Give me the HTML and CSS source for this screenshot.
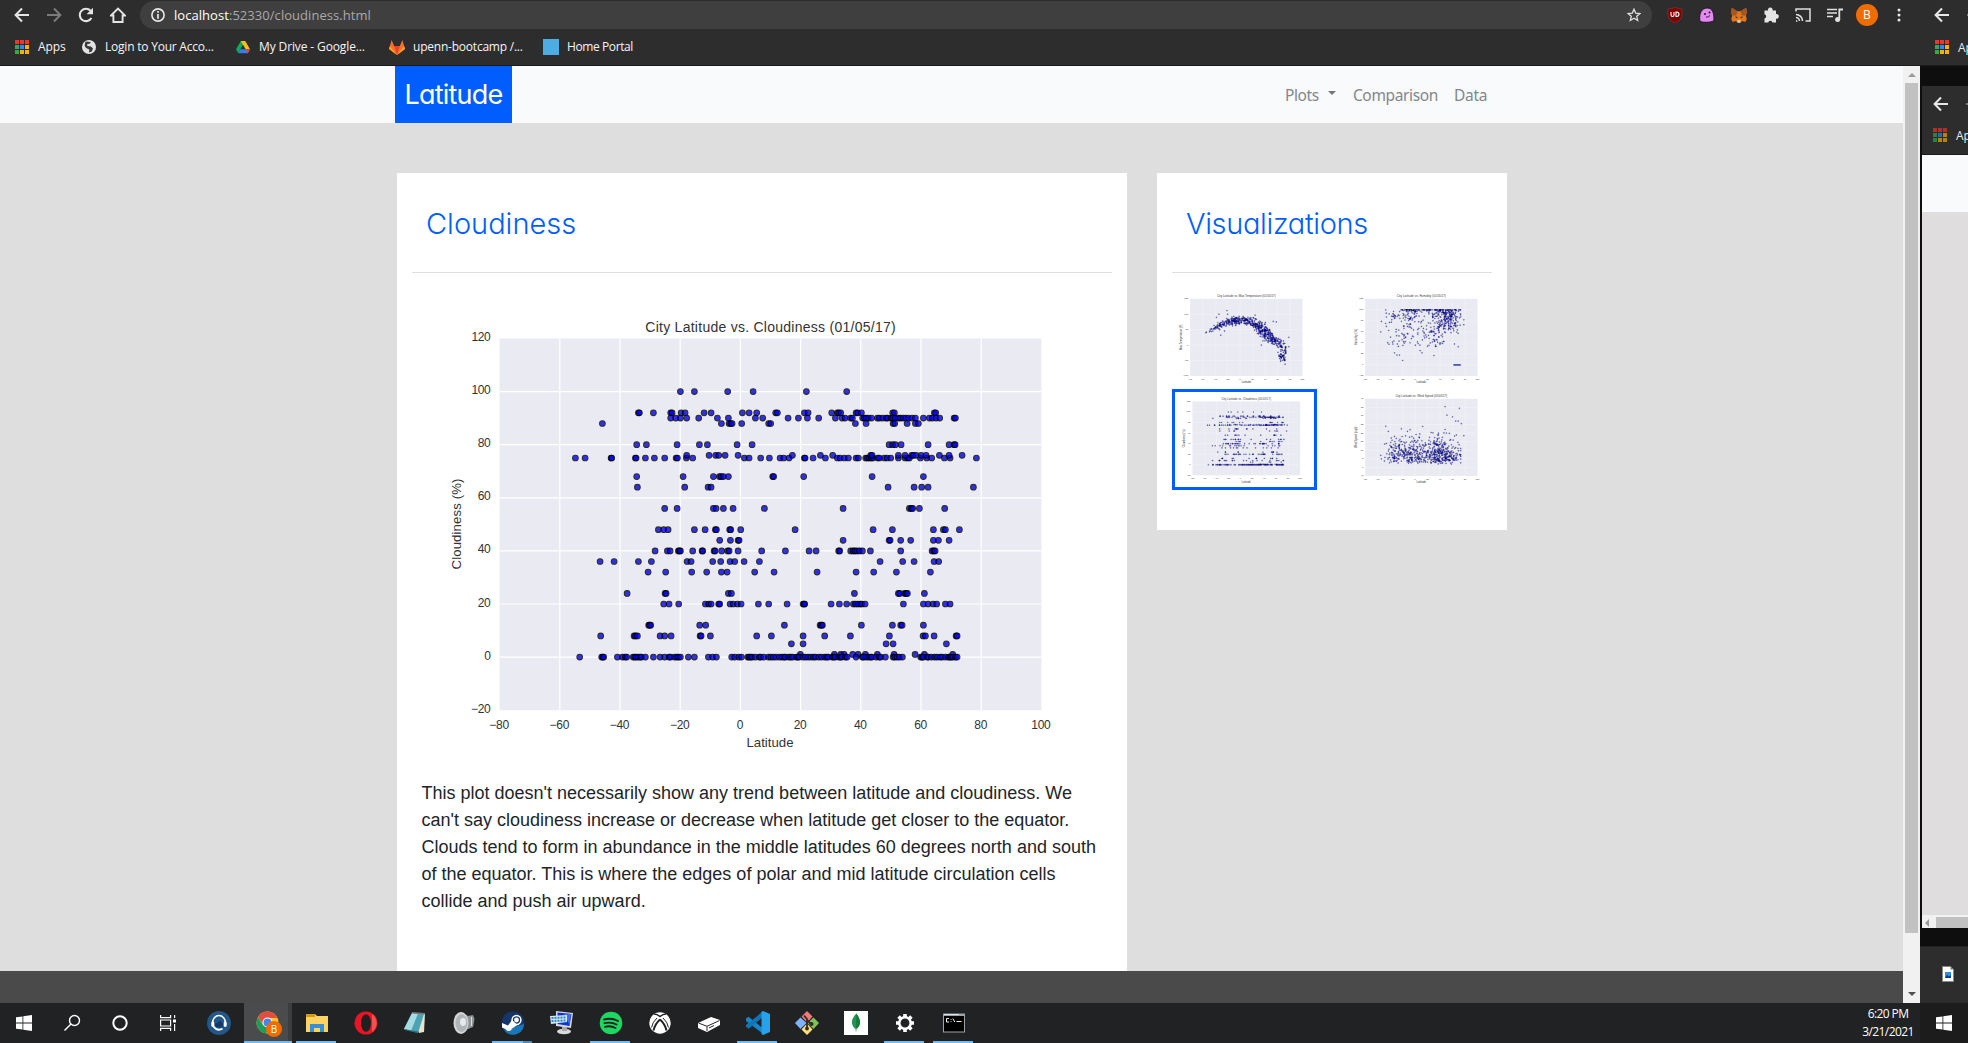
FILE: index.html
```html
<!DOCTYPE html>
<html lang="en">
<head>
<meta charset="utf-8">
<title>Latitude - Cloudiness</title>
<link rel="stylesheet" href="styles.css">
</head>
<body>
<svg class="defs" aria-hidden="true">
  <symbol id="back" viewBox="0 0 16 16"><path d="M15 8H2M8 1.5 1.6 8 8 14.5" fill="none" stroke="currentColor" stroke-width="2"/></symbol>
  <symbol id="forward" viewBox="0 0 16 16"><path d="M1 8h13M8 1.5 14.4 8 8 14.5" fill="none" stroke="currentColor" stroke-width="2"/></symbol>
  <symbol id="grid" viewBox="0 0 14 14">
    <path fill="#f0352b" d="M0 0h4v4H0zM5 0h4v4H5zM10 0h4v4h-4z"/>
    <path fill="#34a853" d="M0 5h4v4H0zM0 10h4v4H0z"/><path fill="#2a8cff" d="M5 5h4v4H5z"/>
    <path fill="#fbb100" d="M10 5h4v4h-4zM5 10h4v4H5zM10 10h4v4h-4z"/>
  </symbol>
  <symbol id="windows" viewBox="0 0 16 16"><path fill="#fff" d="M0 2.3 6.5 1.4v6.1H0zM7.3 1.2 16 0v7.5H7.3zM0 8.4h6.5v6.2L0 13.7zM7.3 8.4H16V16l-8.7-1.2z"/></symbol>
</svg>

<div class="desktop">
  <div class="monitor">
    <header class="toolbar">
      <div class="address-row">
        <svg class="nav-icon"><use href="#back"/></svg>
        <svg class="nav-icon dim"><use href="#forward"/></svg>
        <svg class="nav-icon" viewBox="0 0 16 16"><path d="M13.4 11A6.2 6.2 0 1 1 12.6 3.8" fill="none" stroke="currentColor" stroke-width="2.1"/><path d="M15 .8v6.4H8.6z" fill="currentColor"/></svg>
        <svg class="nav-icon" viewBox="0 0 16 16"><path d="M1 8.5 8 1.5l7 7h-2.4V15H3.4V8.5z" fill="none" stroke="currentColor" stroke-width="1.9"/></svg>
        <div class="omnibox">
          <svg class="info" viewBox="0 0 14 14"><circle cx="7" cy="7" r="6.1" fill="none" stroke="currentColor" stroke-width="1.6"/><path d="M7 3.1v1.7M7 6v4.8" stroke="currentColor" stroke-width="1.7"/></svg>
          <span class="url"><b>localhost</b>:52330/cloudiness.html</span>
          <svg class="star" viewBox="0 0 14 14"><path d="m7 1.2 1.7 3.9 4.2.4-3.2 2.8 1 4.2L7 10.3l-3.7 2.2 1-4.2L1.1 5.5l4.2-.4z" fill="none" stroke="currentColor" stroke-width="1.3"/></svg>
        </div>
        <div class="extensions">
          <svg viewBox="0 0 16 16"><path d="M8 0c2 1.4 4 2 7 2v5c0 4-2.500 7-7 9-4.500-2-7-5-7-9V2c3 0 5-.6 7-2z" fill="#7d0000" stroke="#a33" stroke-width=".6"/><path d="M4 5v3q0 1.500 1.500 1.500T7 8V5M9 5v4.500h.7A2.200 2.200 0 0 0 9.700 5z" fill="none" stroke="#fff" stroke-width="1.1"/></svg>
          <svg viewBox="0 0 16 16"><path d="M1 14.500C-.5 6 3 .8 8.500 1c5 .2 7 5.500 6.300 13-3 1.500-11 1.800-13.800.5z" fill="#e38af0" stroke="#2a102d"/><circle cx="6" cy="7" r="1" fill="#241028"/><circle cx="10.500" cy="5.500" r="1" fill="#241028"/><path d="M7 10q2.500.5 4-1.500" fill="none" stroke="#241028" stroke-width=".9"/></svg>
          <svg viewBox="0 0 16 16"><path d="m.8.7 5.500 3.600h3.400L15.200.7l.6 5-1 3 1 3.300-1.500 3-3.300-1-1.600 1.700H6.600L5 14l-3.300 1L.2 12l1-3.300-1-3z" fill="#e2761b"/><path d="m.8.7 5.500 3.600-.8 4-3.500.4L.2 5.700zM15.200.7 9.700 4.300l.8 4 3.500.4 1.800-3z" fill="#a55422"/><path d="m4 9.500 3 .5-1.500 1.300zM12 9.500 9 10l1.500 1.300z" fill="#2b2b38"/><path d="M6.300 13h3.400l-.4 2.700H6.700z" fill="#d5c7bc"/></svg>
          <svg viewBox="0 0 16 16"><path fill="#e4e4e4" d="M5 3.500a2.400 2.400 0 1 1 4.600 0H13V7a2.400 2.400 0 1 1 0 4.700V15.500H9.500a2.200 2.200 0 0 0-4.300 0H1.500V11.500a2.200 2.200 0 0 0 0-4.300V3.500z"/></svg>
          <svg viewBox="0 0 16 16"><path d="M1 4.500V2h14v12h-4.500M1 7.500a6.500 6.500 0 0 1 6.500 6.500M1 10.500A3.500 3.500 0 0 1 4.500 14" fill="none" stroke="#e0e0e0" stroke-width="1.5"/><path d="M1 12.800A2 2 0 0 1 2.600 14.700H1z" fill="#e0e0e0"/></svg>
          <svg viewBox="0 0 16 16"><path d="M0 2.500h10M0 6h10M0 9.500h6" stroke="#e0e0e0" stroke-width="1.7"/><path d="M12.300 13V2.500H16" fill="none" stroke="#e0e0e0" stroke-width="1.8"/><circle cx="10.600" cy="12.500" r="2.500" fill="#e0e0e0"/></svg>
          <span class="avatar">B</span>
          <svg viewBox="0 0 16 16"><g fill="#e8e8e8"><circle cx="8" cy="3" r="1.500"/><circle cx="8" cy="8" r="1.500"/><circle cx="8" cy="13" r="1.500"/></g></svg>
        </div>
      </div>
      <nav class="bookmarks">
        <span class="bookmark apps"><svg><use href="#grid"/></svg>Apps</span>
        <span class="bookmark login"><svg viewBox="0 0 14 14"><circle cx="7" cy="7" r="7" fill="#e3e3e3"/><path d="M3.500 1.600 8.600 2l-.5 1.500-3 .8.200 1.700 3.700.6 2 2-1.200 3L7 12.600l.3-3L4 8 2.600 5.500z" fill="#393939"/><path d="M7.500 3.800 11 4.500l-1 1.400z" fill="#e3e3e3"/></svg>Login to Your Acco...</span>
        <span class="bookmark drive"><svg viewBox="0 0 16 14"><path d="M5.500 0h5L5 9.500 2.500 14 0 9.500z" fill="#13a95b"/><path d="M5.500 0h5L16 9.500h-5z" fill="#fdc011"/><path d="M5 9.500h11L13.500 14h-11z" fill="#3a7cf0"/><path d="M11 9.500h5L13.500 14z" fill="#e94235"/></svg>My Drive - Google...</span>
        <span class="bookmark gitlab"><svg viewBox="0 0 16 15"><path d="M8 15 0 9 2.600 0l2.600 6h5.600l2.600-6L16 9z" fill="#fc6d26"/><path d="M8 15 5.200 6h5.600z" fill="#e2432a"/><path d="M0 9 1 6l7 9zM16 9l-1-3-7 9z" fill="#fca326"/></svg>upenn-bootcamp /...</span>
        <span class="bookmark portal"><i></i>Home Portal</span>
      </nav>
    </header>

    <div class="viewport">
      <div class="page">
        <nav class="navbar">
          <a class="brand">Latitude</a>
          <div class="links"><a class="plots">Plots<i></i></a><a class="comparison">Comparison</a><a>Data</a></div>
        </nav>
        <main class="content">
          <section class="card article">
            <h1>Cloudiness</h1>
            <hr>
            <svg class="plot" id="plot-cloudiness" viewBox="0 0 699 466"></svg>
            <p>This plot doesn't necessarily show any trend between latitude and cloudiness. We can't say cloudiness increase or decrease when latitude get closer to the equator. Clouds tend to form in abundance in the middle latitudes 60 degrees north and south of the equator. This is where the edges of polar and mid latitude circulation cells collide and push air upward.</p>
          </section>
          <aside class="card side">
            <h1>Visualizations</h1>
            <hr>
            <div class="thumbs">
              <a><svg id="thumb-temperature" viewBox="0 0 699 466"></svg></a>
              <a><svg id="thumb-humidity" viewBox="0 0 699 466"></svg></a>
              <a class="active"><svg id="thumb-cloudiness" viewBox="0 0 699 466"></svg></a>
              <a><svg id="thumb-wind" viewBox="0 0 699 466"></svg></a>
            </div>
          </aside>
        </main>
        <footer class="footer"></footer>
      </div>
      <div class="scrollbar"><i class="up"></i><div class="thumb"></div><i class="down"></i></div>
    </div>

    <div class="taskbar">
      <span class="sys"><svg width="16" height="16"><use href="#windows"/></svg></span>
      <span class="sys"><svg width="18" height="18" viewBox="0 0 18 18"><circle cx="11.500" cy="6.500" r="5" fill="none" stroke="#fff" stroke-width="1.400"/><path d="m8 10-6.500 6.500" stroke="#fff" stroke-width="1.500"/></svg></span>
      <span class="sys"><svg width="16" height="16" viewBox="0 0 16 16"><circle cx="8" cy="8" r="6.700" fill="none" stroke="#fff" stroke-width="2"/></svg></span>
      <span class="sys"><svg width="16" height="16" viewBox="0 0 16 16"><path d="M.6 0v2.600h10V0M.6 16v-2.600h10V16M.6 5h10v6H.6zM14.600 0v3M14.600 9v7" fill="none" stroke="#fff" stroke-width="1.200"/><path d="M13 4.500h3v3h-3z" fill="#fff"/></svg></span>
      <span class="app first"><svg viewBox="0 0 24 24"><circle cx="12" cy="12" r="12" fill="#225787"/><path d="M5.500 12a6.500 7.500 0 0 1 13 0" fill="none" stroke="#fff" stroke-width="1.500"/><path d="M7.500 12.500q3 0 5.500-3 1.500 2.500 3.500 3-.5 4-4.500 4t-4.500-4z" fill="#123a68"/><rect x="4.300" y="10.500" width="3" height="5.500" rx="1.400" fill="#fff"/><rect x="16.700" y="10.500" width="3" height="5.500" rx="1.400" fill="#fff"/><path d="M6.500 15.500q3.500 5 9 2.300" fill="none" stroke="#fff" stroke-width="1.800"/></svg></span>
      <span class="app chrome"><svg viewBox="0 0 24 24"><circle cx="11.500" cy="11.500" r="11" fill="#fbc62c"/><path d="M2 6A11 11 0 0 1 21.500 7h-10L7 13z" fill="#df4e41"/><path d="M2 6a11 11 0 0 0 8 16.400L14 15 7 14z" fill="#1c9d5b"/><circle cx="11.500" cy="11.500" r="5" fill="#fff"/><circle cx="11.500" cy="11.500" r="4" fill="#4285f4"/></svg><b>B</b></span>
      <span class="app open"><svg viewBox="0 0 24 24"><path d="M1 3h9l2 2h11v16H1z" fill="#ffd264"/><path d="M1 3h9v3H1z" fill="#d99814"/><path d="M5 13h14v8h-4v-4H9v4H5z" fill="#378fd8"/></svg></span>
      <span class="app"><svg viewBox="0 0 24 24"><ellipse cx="12" cy="12" rx="11.500" ry="11.500" fill="#e81525"/><path d="M18 3a11 11 0 0 1 0 18z" fill="#f5524f"/><ellipse cx="12" cy="12" rx="5" ry="8.700" fill="#1f2022"/></svg></span>
      <span class="app"><svg viewBox="0 0 24 24"><path d="m9 2 13 1-1 18-5 1z" fill="#e8e2cc"/><path d="m9 2 12 1-6 19L1 18z" fill="#4ba3b4"/><path d="m9 2 6 .5L8 20 1 18z" fill="#a5dbe2"/><path d="m1 18 14 2.500V22L1 19z" fill="#2f6b76"/><path d="m9 1.800 13 1" stroke="#777" stroke-width="1.600"/></svg></span>
      <span class="app"><svg viewBox="0 0 24 24"><path d="m9 1 7 4 5-1 1.500 4-1.500 8-5 2-7 5z" fill="#8f9496"/><ellipse cx="9" cy="12" rx="7.500" ry="11" fill="#d4d6d7"/><ellipse cx="9.500" cy="12" rx="6" ry="9" fill="#b1b5b8"/><ellipse cx="11" cy="11" rx="3" ry="4" fill="#e8e9ea"/><path d="M19.500 6v9" stroke="#ddd"/></svg></span>
      <span class="app open steam"><svg viewBox="0 0 24 24"><circle cx="12" cy="12" r="11.500" fill="#14366b"/><path d="M3 19a11 11 0 0 0 20-6z" fill="#1a76b5"/><circle cx="15.500" cy="9" r="4.400" fill="none" stroke="#fff" stroke-width="1.500"/><circle cx="15.500" cy="9" r="2.400" fill="#fff"/><path d="m1 12 6 2.500 4-5.500 5.500 5-5.500 3.500a3.300 3.300 0 0 1-6 1L1 16.500z" fill="#fff"/></svg></span>
      <span class="app"><svg viewBox="0 0 24 24"><path d="m6 0 17 2-2 15-15-2z" fill="#d7d9df"/><path d="m7.500 1.500 14 1.500-2 12-12-2z" fill="#1330d2"/><path d="m14 2.500 7 .6-1.500 11z" fill="#416cf2"/><ellipse cx="14" cy="20.500" rx="7" ry="2.800" fill="#dadada"/><path d="M12 16h5v4h-5z" fill="#aaa"/><path d="m0 5 17-1v7L1 13z" fill="#d8e7f0"/><path d="m1.500 7 14-.5M1.500 10l14-.5" stroke="#2889c6" stroke-width="2" stroke-dasharray="2 1"/></svg></span>
      <span class="app open"><svg viewBox="0 0 24 24"><circle cx="12" cy="12" r="11.300" fill="#1ed760"/><path d="M5 8.500q7.500-2 14 1.500M5.500 12.200q6.500-1.700 12 1.300M6 15.800q5.500-1.500 10.500 1.200" fill="none" stroke="#1e2320" stroke-width="1.900" stroke-linecap="round"/></svg></span>
      <span class="app"><svg viewBox="0 0 24 24"><circle cx="12" cy="12" r="10.700" fill="#fff"/><path d="M6 3q3 0 6 2.500Q15 3 18 3" fill="none" stroke="#202124" stroke-width="1.600"/><path d="M12 8.500Q7 13 5.500 19.500M12 8.500q5 4.500 6.500 11" fill="none" stroke="#202124" stroke-width="2"/><path d="M9 7Q4.500 11 3.500 16.500M15 7q4.500 4 5.500 9.500" fill="none" stroke="#202124" stroke-width="1"/></svg></span>
      <span class="app"><svg viewBox="0 0 24 24"><path d="m1 12 13-6 9 3v5l-13 7-9-4z" fill="#fff"/><path d="m1.500 12 8.500 3.300L22.500 9.500M10 15.500V20M12 17l5-2.500" fill="none" stroke="#242424"/></svg></span>
      <span class="app open"><svg viewBox="0 0 24 24"><path d="M17 1 2.500 15 0 16.500V14L17 1z" fill="#1280c6"/><path d="m0 7.500 2.500-1.700L18 18v5.500L0 10z" fill="#1685cc"/><path d="m0 15 17-15v6L2.500 18z" fill="#0d75b8"/><path d="m17 0 7 3v18l-7 3-1.500-1V1z" fill="#26a2ec"/></svg></span>
      <span class="app"><svg viewBox="0 0 24 24"><path d="m12 0 5.500 5.500-5.500 6-5.500-6z" fill="#f07a7a"/><path d="m5.500 6.500 6 5.500-6 6L0 12z" fill="#80b3ff"/><path d="m18.500 6.500 5.500 5.500-5.500 6-6-6z" fill="#7cc458"/><path d="m12 12.500 5.500 6L12 24l-5.500-5.500z" fill="#ffe07a"/><path d="M9 4.500 12 8v10M12 9l4 4" fill="none" stroke="#302c2b" stroke-width="1.800"/><circle cx="12" cy="17.500" r="1.900" fill="#302c2b"/><circle cx="16.500" cy="13" r="2" fill="#302c2b"/></svg></span>
      <span class="app"><svg viewBox="0 0 24 24"><path d="M0 0h24v24H0z" fill="#fff"/><path d="M12.300 2.500C6 9 7 15 12 18.500c5.500-4 5-10 .3-16z" fill="#219653"/><path d="M12.300 2.500c4.700 6 5.200 12-.3 16z" fill="#167b3c"/><path d="M12 17v3.500" stroke="#999"/></svg></span>
      <span class="app open"><svg viewBox="0 0 24 24"><circle cx="12" cy="12" r="5.700" fill="none" stroke="#fff" stroke-width="2.500"/><path d="M12 3v3M12 18v3M3 12h3M18 12h3M5.600 5.600 8 8M16 16l2.400 2.400M5.600 18.400 8 16M16 8l2.400-2.400" stroke="#fff" stroke-width="3.600"/></svg></span>
      <span class="app open"><svg viewBox="0 0 24 24"><path d="M1 2.500h22v19H1z" fill="#9da3a8"/><path d="M2 5h20v15.500H2z" fill="#000"/><path d="M2 3.500h15" stroke="#dfe4e8"/><path d="M7 7.500H4.500v3.500H7M9 8v.9M9 10.200v.9M10.800 7.500l2 3.500M14.500 10.500h5" fill="none" stroke="#eee"/></svg></span>
      <div class="clock"><span>6:20 PM</span><span>3/21/2021</span></div>
    </div>
  </div>

  <div class="second">
    <div class="mini-toolbar top">
      <div class="mini-nav"><svg><use href="#back"/></svg><svg class="dim"><use href="#forward"/></svg></div>
      <div class="mini-apps"><svg><use href="#grid"/></svg>Apps</div>
    </div>
    <div class="gap"></div>
    <div class="window">
      <div class="mini-toolbar inner">
        <div class="mini-nav"><svg><use href="#back"/></svg><svg class="dim"><use href="#forward"/></svg></div>
        <div class="mini-apps faded"><svg><use href="#grid"/></svg>Apps</div>
      </div>
      <div class="mini-navbar"></div>
      <div class="mini-page"></div>
      <div class="hscroll"><i></i><b></b></div>
    </div>
    <div class="gap lower"></div>
    <div class="shelf"><svg width="12" height="16" viewBox="0 0 12 16"><path d="M.5.500h8l3 3v12H.5z" fill="#fff" stroke="#888"/><path d="M8.500.500v3h3z" fill="#777"/><path d="M3 6h6v6H3z" fill="#2b8fdf"/><path d="m3 12 2-3 2 1.500L9 9v3z" fill="#103c86"/></svg></div>
    <div class="mini-task"><svg width="16" height="16"><use href="#windows"/></svg></div>
  </div>
</div>
<script src="script.js"></script>
</body>
</html>
```
FILE: styles.css
```css
* { box-sizing: border-box; }
body { margin: 0; width: 1968px; height: 1043px; overflow: hidden; background: #0e0e0e; font-family: "Open Sans", "Noto Sans", sans-serif; }
svg { display: block; flex: none; }
.defs { display: none; }
.desktop { display: flex; height: 1043px; }
.monitor { width: 1920px; flex: none; display: flex; flex-direction: column; }

/* Browser chrome */
.toolbar { height: 66px; background: #2d2d2d; border-bottom: 1px solid #1b1b1b; color: #e8e8e8; }
.address-row { display: flex; align-items: center; height: 30px; padding-left: 14px; }
.nav-icon { width: 16px; height: 16px; margin-right: 16px; color: #e4e4e4; }
.dim { color: #7b7b7b; }
.omnibox { width: 1512px; height: 28px; margin-left: -2px; padding: 0 11px; border-radius: 14px; background: #3f3f3f; display: flex; align-items: center; }
.info { width: 14px; height: 14px; }
.url { flex: 1; margin-left: 9px; font-size: 13px; color: #a9a9a9; line-height: 28px; letter-spacing: .05px; }
.url b { font-weight: 400; color: #fff; }
.star { width: 14px; height: 14px; color: #dedede; }
.extensions { display: flex; align-items: center; padding-left: 15px; gap: 16px; }
.extensions svg { width: 16px; height: 16px; }
.avatar { width: 22px; height: 22px; margin: 0 -3px; border-radius: 50%; background: #f06c00; color: #fff; font-size: 12px; line-height: 22px; text-align: center; }
.bookmarks { display: flex; height: 34px; align-items: center; font-size: 12px; line-height: 16px; padding-left: 15px; color: #f5f5f5; white-space: nowrap; letter-spacing: -.22px; }
.bookmark { display: flex; align-items: center; gap: 9px; }
.bookmark svg { width: 14px; height: 14px; }
.apps { width: 67px; letter-spacing: -.05px; }
.login { width: 154px; }
.drive { width: 153px; letter-spacing: -.12px; }
.gitlab { width: 154px; }
.gitlab svg { width: 16px; height: 15px; }
.gitlab, .portal { gap: 8px; }
.portal { letter-spacing: -.4px; }
.portal i { width: 16px; height: 16px; background: #4bade4; }

/* Page */
.viewport { display: flex; height: 937px; }
.page { width: 1903px; background: #dedede; display: flex; flex-direction: column; }
.navbar { flex: none; height: 57px; padding: 0 416px 0 395px; background: #f8fafc; display: flex; justify-content: space-between; }
.brand { width: 117px; background: #005eff; color: #fff; font: 400 27px/57px Inter, sans-serif; font-feature-settings: "cv11"; text-align: center; letter-spacing: -.8px; }
.links { display: flex; align-items: center; font: 15.500px/24px "Noto Sans", sans-serif; letter-spacing: -.35px; color: #84868a; }
.plots { margin-right: 17px; display: flex; align-items: center; }
.plots i { margin: -3px 0 0 9px; border: 4.800px solid transparent; border-top-color: #777; border-bottom: 0; }
.comparison { margin-right: 16px; }
.content { flex: 1; display: flex; align-items: flex-start; gap: 30px; padding: 50px 0 0 397px; }
.card { background: #fff; padding: 0 15px; }
.article { width: 730px; height: 798px; }
.side { width: 350px; height: 357px; }
.card h1 { margin: 0; height: 99px; padding: 29px 0 0 14px; font: 300 29px/44px Inter, sans-serif; font-feature-settings: "cv11"; color: #005eff; white-space: nowrap; }
.side h1 { letter-spacing: -.35px; }
.card hr { margin: 0; border: 0; height: 1px; background: #dfdfdf; }
.plot { width: 699px; height: 466px; margin: 19px 0 0 0; }
.article p { width: 682px; margin: 22px 0 0 9.500px; font: 18px/27px "Liberation Sans", sans-serif; color: #212529; }
.thumbs { display: grid; grid-template-columns: 145px 145px; gap: 3px 30px; margin-top: 16px; }
.thumbs a { display: block; height: 97px; }
.thumbs svg { width: 145px; height: 97px; }
.thumbs .active { height: 101px; border: 3px solid #005eff; }
.thumbs .active svg { width: 139px; height: 93px; }
.footer { flex: none; height: 32px; background: #4a4a4a; }
.scrollbar { width: 17px; background: #f1f1f1; display: flex; flex-direction: column; align-items: center; }
.scrollbar .thumb { width: 13px; height: 850px; background: #c1c1c1; }
.scrollbar i { border: 4px solid transparent; }
.scrollbar .up { margin: 7px 0 6px; border-bottom-color: #9a9a9a; border-top: 0; }
.scrollbar .down { margin-top: 59px; border-top-color: #505050; border-bottom: 0; }
.tick { font: 12px "Liberation Sans", sans-serif; fill: #333; letter-spacing: -.3px; }
.axis { font: 13.200px "Liberation Sans", sans-serif; fill: #333; }
.title { font: 14px "Liberation Sans", sans-serif; fill: #333; }

/* Taskbar */
.taskbar { height: 40px; background: #202224; display: flex; }
.sys { width: 48px; display: flex; align-items: center; justify-content: center; }
.app { position: relative; width: 49px; display: flex; align-items: center; justify-content: center; }
.app svg { width: 24px; height: 24px; }
.first { margin-left: 2px; }
.chrome { width: 48px; margin-left: 1px; background: #4a4b4c; box-shadow: inset 0 -2px #76b9ed, inset -4px 0 #3b3d3e; }
.chrome b { position: absolute; left: 22px; top: 18px; width: 16px; height: 16px; border-radius: 50%; background: #f06c00; color: #fff; font-size: 10px; font-weight: 400; line-height: 16px; text-align: center; }
.open::after { content: ""; position: absolute; left: 4px; bottom: 0; width: 40px; height: 2px; background: #76b9ed; }
.steam::after { background: linear-gradient(90deg, #76b9ed 31px, #5488b0 31px); }
.clock { width: 64px; margin-left: auto; display: flex; flex-direction: column; align-items: center; padding: 2px 0 0 0; color: #fff; font: 12px/18px "Open Sans", sans-serif; letter-spacing: -.6px; }

/* Edge of the neighbouring monitor */
.second { width: 48px; overflow: hidden; display: flex; flex-direction: column; background: #0e0e0e; }
.mini-toolbar { height: 69px; background: #2d2d2d; border-bottom: 1px solid #1b1b1b; color: #e8e8e8; }
.mini-toolbar.top { height: 66px; padding-left: 1px; }
.mini-nav { height: 30px; display: flex; align-items: center; gap: 16px; padding-left: 13px; }
.mini-nav svg { width: 16px; height: 16px; }
.mini-apps { height: 34px; display: flex; align-items: center; gap: 9px; font-size: 12px; padding-left: 14px; }
.mini-apps svg { width: 14px; height: 14px; }
.inner .mini-nav { height: 36px; padding-left: 11px; }
.inner .mini-apps { margin-top: -4px; padding-left: 11px; }
.faded svg { opacity: .65; }
.gap { height: 20px; }
.window { margin-left: 2px; height: 842px; display: flex; flex-direction: column; }
.mini-navbar { height: 57px; background: #f8fafc; }
.mini-page { flex: 1; background: #dfdddd; }
.hscroll { height: 13px; background: #f1f1f1; display: flex; align-items: center; }
.hscroll i { border: 4px solid transparent; border-right-color: #9a9a9a; border-left: 0; margin: 2px 7px 0 3px; }
.hscroll b { width: 34px; height: 11px; margin-top: 2px; background: #c1c1c1; }
.lower { height: 18px; }
.shelf { height: 57px; padding: 19px 0 0 22px; background: #2d2d2d; border-top: 1px solid #222; }
.mini-task { height: 40px; padding: 12px 0 0 16px; background: #1c1c1c; }
```
FILE: script.js
```js
// Plot area inside the 699 x 466 figure.
const AREA = { left: 87.6, right: 629.4, top: 46.5, bottom: 418.2 };

const rows = [
  [100, [723,765,865], [11,171,292]],
  [92, [597,600,642,694,698,725,737,794,815,909,929], [22,79,84,165,176,247,264,268,274,320,325,336,430,435,555,559]],
  [90, [694,709,723,742,778,834,867], [18,40,116,147,174,208,258,278,287,304,309,340,345,350,357,366,384,390,400,410,415,425,430,437,447,453,461,469,477,488,498,522,540,549,560,571,614,618]],
  [88, [489,846,869,874,878,907], [58,64,318,350,431,436,473,498,507]],
  [80, [592,621,713,780,804,893], [8,419,430,438,455,536,599,614,617]],
  [75, [408,437,515,517,588,590,618,645,676,710,714,741,760,915,929], [34,60,92,103,119,165,167,191,228,264,272,285,297,320,327,349,354,360,366,370,385,390,405,413,424,447,467,475,480,513,532,547,585,602,681]],
  [76, [742,809,829,838,857,896], [129,213,250,364,368,447,467,487,492,500,515,530,570,599,638]],
  [68, [592,731,822,840,845,852,867], [70,73,163,368,522]],
  [64, [594,736,806,815], [416,494,517,536,672]],
  [56, [676,713,822,830,852,881], [45,281,480,486,490,510,586]],
  [48, [657,673,686,765,797,828,831,871,874,904], [137,371,429,552,582,588,630]],
  [44, [841,873,896,899], [281,419,422,454,484,552,567,599]],
  [40, [647,684,692,717,720,723,760,788,790,824,827,847,865,869,896], [37,108,179,200,268,271,304,311,316,322,330,339,363,454,548,553,557]],
  [36, [482,524,597,636,743,755,820,844,872,886,914], [30,392,460,494,554,568]],
  [32, [626,679,757,802,846,863], [16,74,203,320,373,441,543]],
  [24, [563,677,680,867,876], [315,447,451,466,470,474,525]],
  [20, [673,689,718,798,808,815,838,841,872,881,894,905], [27,58,113,161,164,166,245,270,292,312,318,325,332,337,347,462,522,536,551,562,588,602]],
  [12, [628,631,634,781,799], [105,212,216,219,336,429,454,458,522]],
  [8, [484,584,588,594,662,676,695,782,785,813], [22,66,161,226,303,420,521,528,554,620,623]],
  [5, [], [126,161,410,431,591]],
  [1, [], [153,255,274,284,310,326,348,384,434,497,525,610]],
  [0, [421,487,490,493,534,549,557,562,581,586,590,596,602,606,618,642,662,676,689,693,705,712,717,723,747,765,807,820,831,877,886,898,906,925,929],
      [4,8,18,30,34,43,57,64,72,80,90,98,104,108,118,124,130,141,145,149,160,168,176,184,192,198,208,216,226,232,236,248,253,257,268,273,277,288,293,320,339,342,350,357,364,367,380,389,394,408,431,436,443,450,459,514,518,522,534,537,546,556,563,572,578,588,597,601,605,610,618,623]],
];
const cloudiness = rows.flatMap(([v, a, b]) =>
  [...a.map(x => [(x - 903) / 9.03, v]), ...b.map(x => [(x + 27) / 9.03, v])]);

// Deterministic noise for the small previews.
let seed = 7;
const rnd = () => (seed = (seed * 16807) % 2147483647) / 2147483647;
const gauss = () => rnd() + rnd() + rnd() + rnd() - 2;
const latitude = () => {
  const r = rnd();
  if (r < .08) return -35 + gauss() * 12;
  return r < .4 ? -8 + gauss() * 22 : Math.min(73, 42 + gauss() * 27);
};

const temperature = Array.from({ length: 560 }, () => {
  const x = latitude();
  const base = x < 20 ? 79 - Math.pow(x - 2, 2) * .0125 : 77 - (x - 18) * 1.65;
  return [x, base + gauss() * (x > 20 ? 19 : 10)];
}).concat(Array.from({ length: 35 }, () => [62 + rnd() * 10, -28 - rnd() * 25]),
  [[-21,112],[-20,100],[-34,100],[-38,90],[-31,32],[53,77],[58,75],[78,-5],[78,25],[72,-62],[72,-50],[-55,40],[-54,42],[-46,44],[-25,46],[34,0]]);

const humidity = Array.from({ length: 340 }, () => {
  const x = latitude();
  return [x, Math.max(18, 99 - Math.pow(rnd(), 1.5) * (x > 48 ? 45 : 66))];
}).concat(Array.from({ length: 75 }, () => [45 + rnd() * 20, 70 + rnd() * 26]),
  Array.from({ length: 90 }, () => [rnd() * 96 - 23, 100]),
  Array.from({ length: 9 }, (_, i) => [62 + i * 1.300, 0]),
  [[-20,8],[-25,18],[-54,79],[-55,60],[-47,100],[-46,87],[-46,70],[-33,22],[-29,18],[8,26],[11,22],[30,17],[78,82],[78,73],[63,38],[69,33]]);

const wind = Array.from({ length: 620 }, () => {
  const x = latitude();
  return [x, 1.500 + Math.abs(gauss()) * 7 + Math.pow(rnd(), 4) * 12 + rnd() * 3];
}).concat([[48,35.500],[71,34.500],[51,30.500],[60,29.500],[65,27],[69,27],[74,25.500],[-47,24],[-43,21],[-22,22.500],[78,18.500],[-55,7],[-54,5],[-46,14]]);

function draw(id, title, label, min, max, step, points) {
  const X = v => AREA.left + (v + 80) * (AREA.right - AREA.left) / 180;
  const Y = v => AREA.bottom - (v - min) * (AREA.bottom - AREA.top) / (max - min);
  const minus = v => String(v).replace('-', '\u2212');
  const small = id.startsWith('thumb');
  let s = `<rect x="${AREA.left}" y="${AREA.top}" width="${AREA.right - AREA.left}" height="${AREA.bottom - AREA.top}" fill="#eaeaf2"/>`;
  for (let v = -80; v <= 100; v += 20) {
    if (v > -80 && v < 100) s += `<path d="M${X(v)} ${AREA.top}V${AREA.bottom}" stroke="#fff" stroke-width="1.200"/>`;
    s += `<text class="tick" x="${X(v) - .5}" y="436.500" text-anchor="middle">${minus(v)}</text>`;
  }
  for (let v = min; v <= max; v += step) {
    if (v > min && v < max) s += `<path d="M${AREA.left} ${Y(v)}H${AREA.right}" stroke="#fff" stroke-width="1.200"/>`;
    s += `<text class="tick" x="78.500" y="${Y(v) + 2.500}" text-anchor="end">${minus(v)}</text>`;
  }
  for (const [x, y] of points)
    s += `<circle cx="${X(x).toFixed(1)}" cy="${Y(y).toFixed(1)}" r="${small ? 2.900 : 2.800}" fill="#00f" stroke="#000" stroke-width="${small ? 1.300 : 1.100}" opacity="${small ? .65 : .8}"/>`;
  s += `<text class="title" x="358.500" y="39.500" text-anchor="middle" textLength="${title.length * 6.420}">${title}</text>`;
  s += `<text class="axis" x="358" y="454.500" text-anchor="middle">Latitude</text>`;
  s += `<text class="axis" transform="translate(48.500 232) rotate(-90)" text-anchor="middle" textLength="${label.length * 6.500}">${label}</text>`;
  document.getElementById(id).innerHTML = s;
}

draw('plot-cloudiness', 'City Latitude vs. Cloudiness (01/05/17)', 'Cloudiness (%)', -20, 120, 20, cloudiness);
draw('thumb-cloudiness', 'City Latitude vs. Cloudiness (01/05/17)', 'Cloudiness (%)', -20, 120, 20, cloudiness);
draw('thumb-temperature', 'City Latitude vs. Max Temperature (01/05/17)', 'Max Temperature (F)', -100, 150, 50, temperature);
draw('thumb-humidity', 'City Latitude vs. Humidity (01/05/17)', 'Humidity (%)', -20, 120, 20, humidity);
draw('thumb-wind', 'City Latitude vs. Wind Speed (01/05/17)', 'Wind Speed (mph)', -5, 40, 5, wind);
```
